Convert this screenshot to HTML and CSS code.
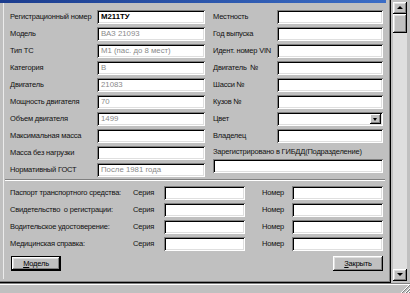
FILE: index.html
```html
<!DOCTYPE html>
<html>
<head>
<meta charset="utf-8">
<title>Карточка ТС</title>
<link rel="stylesheet" href="styles.css">
</head>
<body>
<div class="screen">
  <div class="main">
    <div class="child">
      <div class="titlebar"></div>
      <div class="client">
        <div class="top">
          <div class="grid gl">
            <span class="lbl">Регистрационный номер</span><div class="field bold">М211ТУ</div>
            <span class="lbl">Модель</span><div class="field">ВАЗ 21093</div>
            <span class="lbl">Тип ТС</span><div class="field">М1 (пас. до 8 мест)</div>
            <span class="lbl">Категория</span><div class="field">В</div>
            <span class="lbl">Двигатель</span><div class="field">21083</div>
            <span class="lbl">Мощность двигателя</span><div class="field">70</div>
            <span class="lbl">Объем двигателя</span><div class="field">1499</div>
            <span class="lbl">Максимальная масса</span><div class="field"></div>
            <span class="lbl">Масса без нагрузки</span><div class="field"></div>
            <span class="lbl">Нормативный ГОСТ</span><div class="field">После 1981 года</div>
          </div>
          <div class="rcol">
            <div class="grid gr">
              <span class="lbl">Местность</span><div class="field"></div>
              <span class="lbl">Год выпуска</span><div class="field"></div>
              <span class="lbl">Идент. номер VIN</span><div class="field"></div>
              <span class="lbl">Двигатель&nbsp; №</span><div class="field"></div>
              <span class="lbl">Шасси №</span><div class="field"></div>
              <span class="lbl">Кузов №</span><div class="field"></div>
              <span class="lbl">Цвет</span><div class="field combo"><span class="dd"></span></div>
              <span class="lbl">Владелец</span><div class="field"></div>
            </div>
            <div class="reglabel">Зарегистрировано в ГИБДД(Подразделение)</div>
            <div class="field wide"></div>
          </div>
        </div>
        <div class="sep"></div>
        <div class="docs">
          <span class="lbl">Паспорт транспортного средства:</span><span class="lbl">Серия</span><div class="field"></div><span></span><span class="lbl">Номер</span><div class="field"></div>
          <span class="lbl">Свидетельство&nbsp; о регистрации:</span><span class="lbl">Серия</span><div class="field"></div><span></span><span class="lbl">Номер</span><div class="field"></div>
          <span class="lbl">Водительское удостоверение:</span><span class="lbl">Серия</span><div class="field"></div><span></span><span class="lbl">Номер</span><div class="field"></div>
          <span class="lbl">Медицинская справка:</span><span class="lbl">Серия</span><div class="field"></div><span></span><span class="lbl">Номер</span><div class="field"></div>
        </div>
        <div class="buttons">
          <button class="btn default"><u>М</u>одель</button>
          <button class="btn"><u>З</u>акрыть</button>
        </div>
      </div>
    </div>
    <div class="vscroll">
      <div class="sbtn up"></div>
      <div class="thumb"></div>
      <div class="track"></div>
      <div class="sbtn down"></div>
    </div>
  </div>
  <div class="status">
    <svg class="grip" width="10" height="8" viewBox="0 0 10 8">
      <path d="M9 0 L1 8 M10 3 L5 8 M10 6 L8 8" stroke="#fff" stroke-width="1"/>
      <path d="M10 0 L2 8 M10 4 L6 8 M10 7 L9 8" stroke="#808080" stroke-width="1"/>
    </svg>
  </div>
</div>
</body>
</html>
```

FILE: styles.css
```css
* { box-sizing: border-box; }
body { margin: 0; background: #c0c0c0; }

.screen {
  width: 410px;
  height: 293px;
  overflow: hidden;
  background: #c0c0c0;
  font-family: "Liberation Sans", Arial, sans-serif;
  font-size: 7.5px;
  letter-spacing: -0.2px;
  color: #111;
}

.main { display: flex; height: 283px; }

.child {
  width: 391px;
  height: 283px;
  padding: 0 4px 4px 0;
  box-shadow: inset -1px -1px #000, inset -2px -2px #808080;
  display: flex;
  flex-direction: column;
}

.titlebar {
  height: 3px;
  margin-right: 1px;
  background: linear-gradient(90deg, #1b3c8e, #3b6dc6);
}

.client {
  flex: 1;
  margin-left: 3px;
  border-left: 1px solid #ececec;
  padding-top: 7px;
}

.top { display: flex; gap: 8px; margin-left: 6px; }

.grid {
  display: grid;
  grid-auto-rows: 14px;
  row-gap: 3px;
  align-items: center;
}
.gl { grid-template-columns: 87px 108px; }
.gr { grid-template-columns: 64px 106px; }

.lbl { white-space: nowrap; line-height: 14px; }

.rcol { display: flex; flex-direction: column; }
.reglabel { height: 13px; margin-top: 3px; line-height: 12px; white-space: nowrap; }

.field {
  height: 14px;
  background: #fff;
  box-shadow: inset 1px 1px #808080, inset -1px -1px #fff, inset 2px 2px #000, inset -2px -2px #dfdfdf;
  padding-left: 4px;
  line-height: 14px;
  font-size: 7.8px;
  letter-spacing: 0;
  color: #8a8a8a;
  white-space: nowrap;
  overflow: hidden;
}
.field.bold { color: #000; font-weight: bold; }
.field.wide { width: 170px; }

.combo { position: relative; }
.dd {
  position: absolute;
  right: 2px;
  top: 2px;
  width: 11px;
  height: 10px;
  background: #c0c0c0;
  box-shadow: inset -1px -1px #000, inset 1px 1px #fff, inset -2px -2px #808080;
}
.dd::after {
  content: "";
  position: absolute;
  left: 3px;
  top: 4px;
  border-left: 2.5px solid transparent;
  border-right: 2.5px solid transparent;
  border-top: 3px solid #000;
}

.sep {
  height: 2px;
  margin: 2px 2px 0 1px;
  border-top: 1px solid #808080;
  border-bottom: 1px solid #fff;
}

.docs {
  display: grid;
  grid-template-columns: 123px 31px 81px 17px 30px 91px;
  grid-auto-rows: 14px;
  row-gap: 3px;
  align-items: center;
  margin: 5px 0 0 6px;
}

.buttons {
  display: flex;
  justify-content: space-between;
  margin: 5px 4px 0 7px;
}

.btn {
  width: 50px;
  height: 15px;
  padding: 0;
  border: 0;
  font: inherit;
  letter-spacing: -0.2px;
  color: #000;
  background: #c0c0c0;
  box-shadow: inset -1px -1px #000, inset 1px 1px #fff, inset -2px -2px #808080, inset 2px 2px #dfdfdf;
}
.btn.default {
  box-shadow: inset 0 0 0 1px #000, inset -2px -2px #000, inset 2px 2px #fff, inset -3px -3px #808080, inset 3px 3px #dfdfdf;
}

.vscroll {
  width: 19px;
  display: flex;
  flex-direction: column;
  padding: 2px 3px 2px 2px;
}
.sbtn {
  height: 12px;
  position: relative;
  background: #c0c0c0;
  box-shadow: inset -1px -1px #000, inset 1px 1px #fff, inset -2px -2px #808080, inset 2px 2px #dfdfdf;
}
.sbtn::after {
  content: "";
  position: absolute;
  left: 4px;
  top: 4px;
  border-left: 3px solid transparent;
  border-right: 3px solid transparent;
}
.sbtn.up::after { border-bottom: 3px solid #000; }
.sbtn.down::after { border-top: 3px solid #000; }

.thumb {
  height: 19px;
  background: #c0c0c0;
  box-shadow: inset -1px -1px #000, inset 1px 1px #fff, inset -2px -2px #808080, inset 2px 2px #dfdfdf;
}
.track { flex: 1; background: #dedede; }

.status {
  height: 10px;
  position: relative;
  border-top: 1px solid #808080;
  box-shadow: inset 0 1px #fff;
}
.grip { position: absolute; right: 0; bottom: 0; }
```
